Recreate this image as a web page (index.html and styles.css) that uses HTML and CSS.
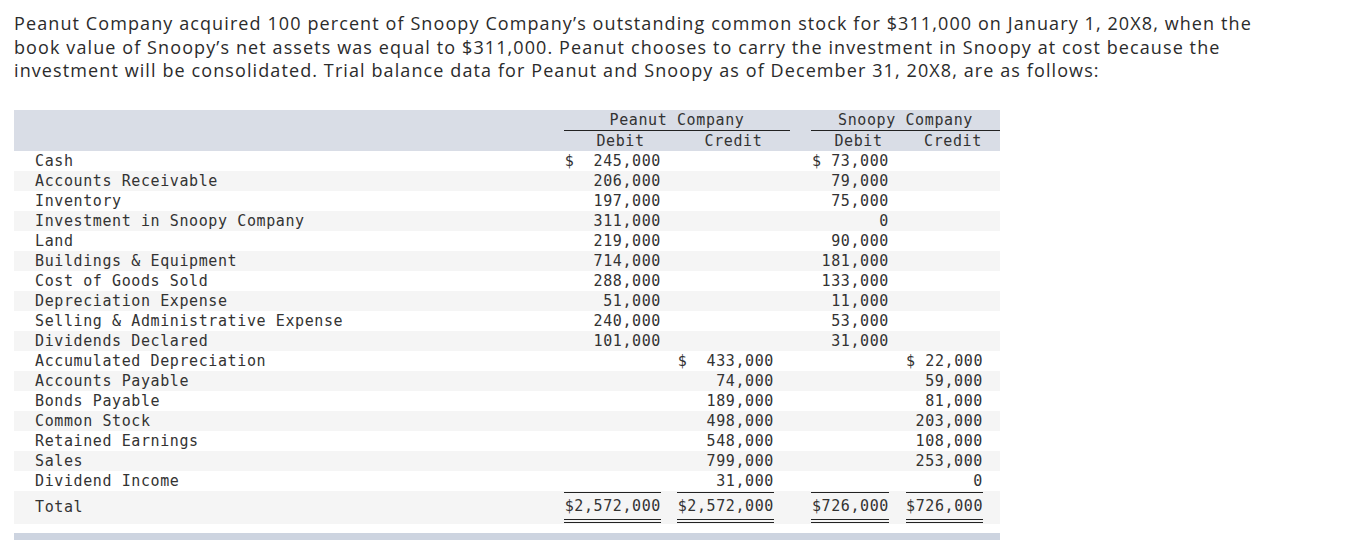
FILE: index.html
```html
<!DOCTYPE html>
<html>
<head>
<meta charset="utf-8">
<link rel="stylesheet" href="styles.css">
</head>
<body>
<div class="page">
  <p class="intro">Peanut Company acquired 100 percent of Snoopy Company’s outstanding common stock for $311,000 on January 1, 20X8, when the book value of Snoopy’s net assets was equal to $311,000. Peanut chooses to carry the investment in Snoopy at cost because the investment will be consolidated. Trial balance data for Peanut and Snoopy as of December 31, 20X8, are as follows:</p>
  <table class="tb">
    <colgroup>
      <col class="c-lbl"><col class="c-pn"><col class="c-pn"><col class="c-sp"><col class="c-sd"><col class="c-sc">
    </colgroup>
    <thead>
      <tr class="h1"><th></th><th colspan="2" class="grp">Peanut Company</th><th></th><th colspan="2" class="grp">Snoopy Company</th></tr>
      <tr class="h2"><th></th><th>Debit</th><th>Credit</th><th></th><th>Debit</th><th>Credit</th></tr>
    </thead>
    <tbody>
      <tr><td class="lbl">Cash</td><td class="n">$  245,000</td><td class="n"></td><td></td><td class="s">$ 73,000</td><td class="s"></td></tr>
      <tr><td class="lbl">Accounts Receivable</td><td class="n">206,000</td><td class="n"></td><td></td><td class="s">79,000</td><td class="s"></td></tr>
      <tr><td class="lbl">Inventory</td><td class="n">197,000</td><td class="n"></td><td></td><td class="s">75,000</td><td class="s"></td></tr>
      <tr><td class="lbl">Investment in Snoopy Company</td><td class="n">311,000</td><td class="n"></td><td></td><td class="s">0</td><td class="s"></td></tr>
      <tr><td class="lbl">Land</td><td class="n">219,000</td><td class="n"></td><td></td><td class="s">90,000</td><td class="s"></td></tr>
      <tr><td class="lbl">Buildings &amp; Equipment</td><td class="n">714,000</td><td class="n"></td><td></td><td class="s">181,000</td><td class="s"></td></tr>
      <tr><td class="lbl">Cost of Goods Sold</td><td class="n">288,000</td><td class="n"></td><td></td><td class="s">133,000</td><td class="s"></td></tr>
      <tr><td class="lbl">Depreciation Expense</td><td class="n">51,000</td><td class="n"></td><td></td><td class="s">11,000</td><td class="s"></td></tr>
      <tr><td class="lbl">Selling &amp; Administrative Expense</td><td class="n">240,000</td><td class="n"></td><td></td><td class="s">53,000</td><td class="s"></td></tr>
      <tr><td class="lbl">Dividends Declared</td><td class="n">101,000</td><td class="n"></td><td></td><td class="s">31,000</td><td class="s"></td></tr>
      <tr><td class="lbl">Accumulated Depreciation</td><td class="n"></td><td class="n">$  433,000</td><td></td><td class="s"></td><td class="s">$ 22,000</td></tr>
      <tr><td class="lbl">Accounts Payable</td><td class="n"></td><td class="n">74,000</td><td></td><td class="s"></td><td class="s">59,000</td></tr>
      <tr><td class="lbl">Bonds Payable</td><td class="n"></td><td class="n">189,000</td><td></td><td class="s"></td><td class="s">81,000</td></tr>
      <tr><td class="lbl">Common Stock</td><td class="n"></td><td class="n">498,000</td><td></td><td class="s"></td><td class="s">203,000</td></tr>
      <tr><td class="lbl">Retained Earnings</td><td class="n"></td><td class="n">548,000</td><td></td><td class="s"></td><td class="s">108,000</td></tr>
      <tr><td class="lbl">Sales</td><td class="n"></td><td class="n">799,000</td><td></td><td class="s"></td><td class="s">253,000</td></tr>
      <tr><td class="lbl">Dividend Income</td><td class="n"></td><td class="n">31,000</td><td></td><td class="s"></td><td class="s">0</td></tr>
      <tr class="total"><td class="lbl">Total</td><td class="n"><span class="sum">$2,572,000</span></td><td class="n"><span class="sum">$2,572,000</span></td><td></td><td class="s"><span class="sum">$726,000</span></td><td class="s"><span class="sum">$726,000</span></td></tr>
    </tbody>
  </table>
  <div class="foot-bar"></div>
</div>
</body>
</html>
```

FILE: styles.css
```css
html, body {
  margin: 0;
  padding: 0;
  background: #fff;
}

.page {
  padding: 12px 0 0 14px;
}

.intro {
  margin: 0;
  width: 1275px;
  font-family: "Open Sans", "Noto Sans", sans-serif;
  font-size: 18px;
  letter-spacing: 1.1px;
  line-height: 23.5px;
  color: #2b2b2b;
}

.tb {
  margin-top: 27px;
  border-collapse: collapse;
  border-spacing: 0;
  table-layout: fixed;
  width: 986px;
  font-family: "DejaVu Sans Mono", monospace;
  font-size: 15px;
  letter-spacing: 0.6px;
  color: #333;
}

.c-lbl { width: 550px; }
.c-pn { width: 113px; }
.c-sp { width: 21px; }
.c-sd { width: 95px; }
.c-sc { width: 94px; }

.tb thead tr {
  background: #d9dde6;
}

.tb th {
  font-weight: normal;
  padding: 0;
  text-align: center;
  white-space: pre;
}

.tb .h1 th {
  height: 20px;
  line-height: 20px;
}

.tb .h1 th.grp {
  border-bottom: 1px solid #222;
}

.tb .h2 th {
  height: 20px;
  line-height: 20px;
}

.tb td {
  padding: 0;
  height: 20px;
  line-height: 20px;
  white-space: pre;
}

.tb tbody tr:nth-child(even) {
  background: #f5f5f5;
}

.tb td.lbl {
  padding-left: 21px;
  text-align: left;
}

.tb td.n {
  text-align: right;
  padding-right: 16px;
}

.tb td.s {
  text-align: right;
  padding-right: 17px;
}

.tb .total td {
  height: 32px;
  vertical-align: top;
}

.tb .total td.lbl {
  line-height: 33px;
}

.sum {
  display: block;
  margin-top: 1px;
  border-top: 1px solid #222;
  border-bottom: 4px double #222;
  line-height: 26px;
  text-align: right;
}

.foot-bar {
  margin-top: 9px;
  width: 986px;
  height: 7px;
  background: #cdd4e0;
}
```
